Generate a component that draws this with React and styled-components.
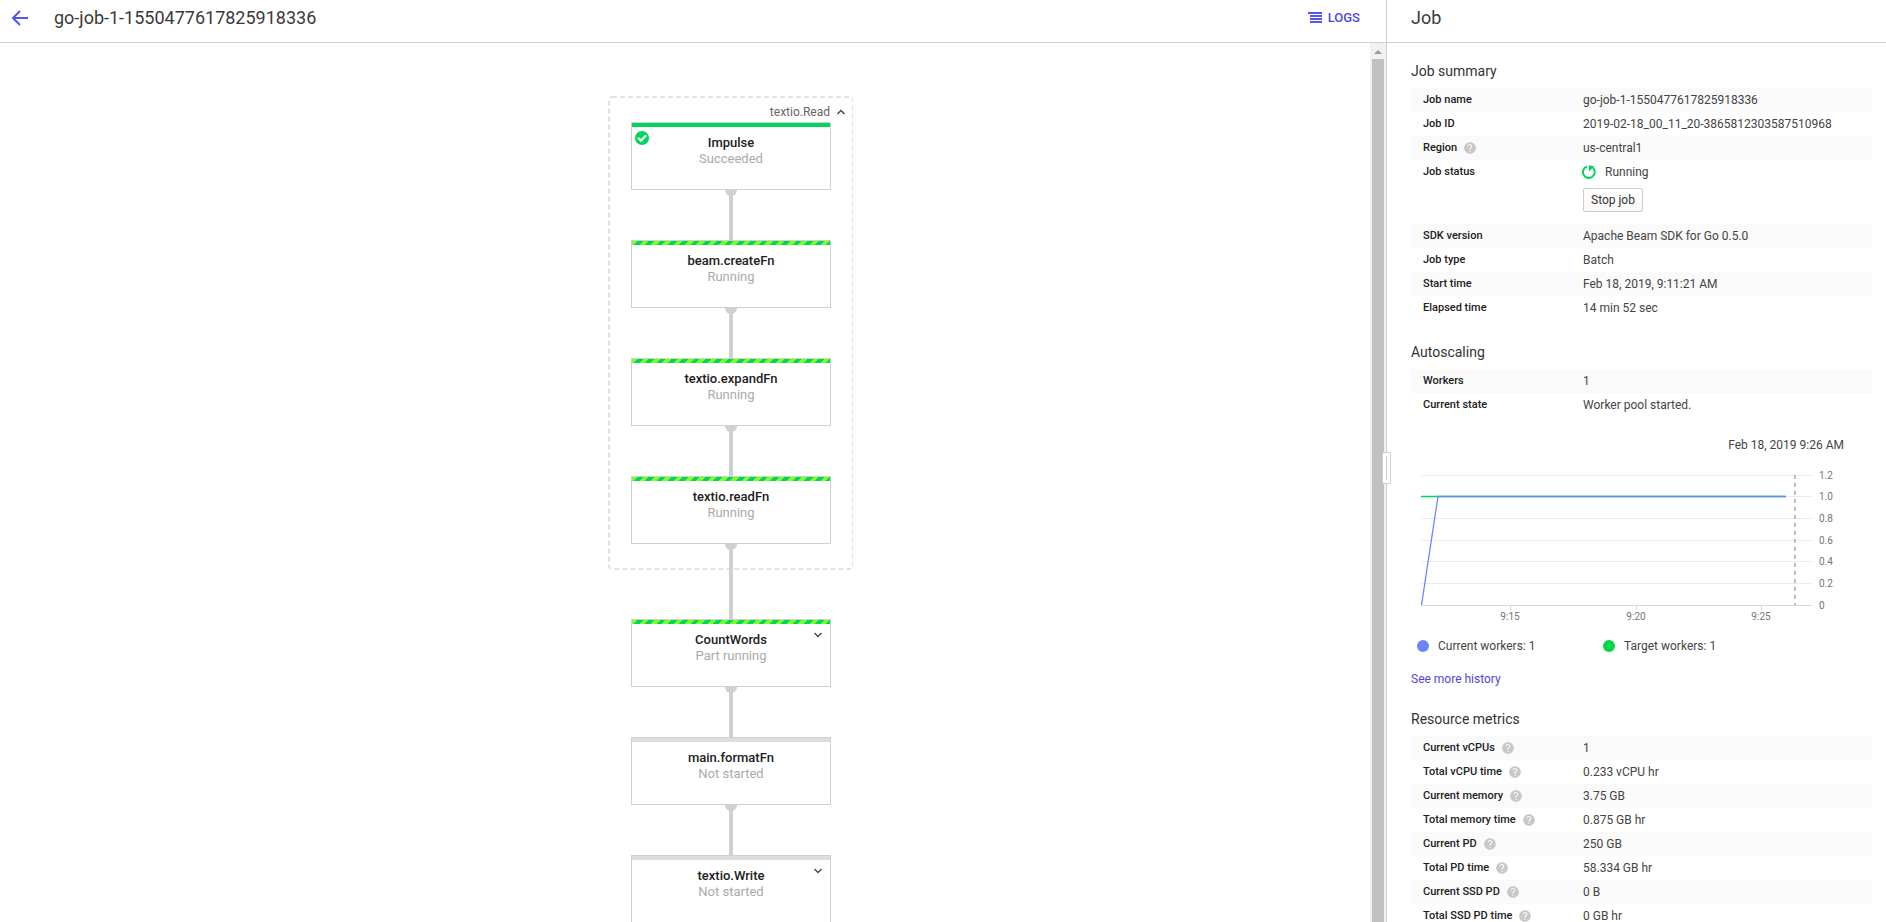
import React from "react";
import styled, { createGlobalStyle, css } from "styled-components";
import { MdHelp } from "react-icons/md";

const Global = createGlobalStyle`
  *, *::before, *::after { box-sizing: border-box; }
  html, body, #root { height: 100%; }
  body { margin: 0; background: #fff; overflow: hidden; }
  body, button { font-family: Roboto, "Liberation Sans", sans-serif; }
  h1, h2, h3, p { margin: 0; font-weight: 400; }
`;

const Page = styled.div`
  display: flex;
  height: 100vh;
  color: #333;
`;

const Main = styled.main`
  flex: 1;
  min-width: 0;
  display: flex;
  flex-direction: column;
`;

const Bar = styled.header`
  flex: none;
  display: flex;
  align-items: center;
  height: 43px;
  padding: 0 26px 6px 11px;
  border-bottom: 1px solid #d0d0d0;
`;

const PanelBar = styled(Bar)`
  padding: 0 14px 6px 24px;
`;

const Title = styled.h1`
  font-size: 18px;
  line-height: 24px;
  color: #3a3a3a;
`;

const BackLink = styled.a`
  display: flex;
  width: 43px;
`;

const LogsButton = styled.button`
  display: flex;
  align-items: center;
  gap: 6px;
  margin-left: auto;
  padding: 0;
  border: 0;
  background: none;
  color: #5146e0;
  font-size: 13px;
  line-height: 16px;
  font-weight: 500;
`;

const Workspace = styled.div`
  flex: 1;
  min-height: 0;
  display: flex;
`;

const Canvas = styled.section`
  flex: 1;
  display: flex;
  flex-direction: column;
  align-items: center;
  padding: 53px 0 0 92px;
  overflow: hidden;
`;

const Group = styled.div`
  flex: none;
  position: relative;
  width: 246px;
  height: 474px;
  padding-top: 6px;
  display: flex;
  flex-direction: column;
  align-items: center;
`;

const GroupOutline = styled.svg`
  position: absolute;
  inset: 0;
`;

const GroupHeader = styled.button`
  flex: none;
  display: flex;
  align-items: center;
  justify-content: flex-end;
  gap: 7px;
  width: 228px;
  height: 20px;
  padding: 0;
  border: 0;
  background: none;
  font-size: 12px;
  line-height: 16px;
  color: #666;
`;

const stripes = css`
  background: repeating-linear-gradient(135deg, #7dff26 0 4px, #00d65b 4px 8px);
`;

const Node = styled.article`
  flex: none;
  position: relative;
  width: 200px;
  height: 68px;
  border: 1px solid #d0d0d0;
  background: #fff;
  text-align: center;

  &::before {
    content: "";
    display: block;
    height: 4px;
    background: ${(p) => (p.$state === "done" ? "#00d65b" : "#dedede")};
    ${(p) => p.$state === "running" && stripes}
  }
`;

const NodeName = styled.h2`
  padding-top: 8px;
  font-size: 13px;
  line-height: 16px;
  font-weight: 500;
  color: #212121;
`;

const NodeState = styled.p`
  font-size: 13px;
  line-height: 16px;
  color: #aaa;
`;

const DoneBadge = styled.svg`
  position: absolute;
  left: 3px;
  top: 8px;
`;

const ExpandButton = styled.button`
  position: absolute;
  right: 8px;
  top: 12px;
  display: flex;
  padding: 0;
  border: 0;
  background: none;
`;

const Edge = styled.div`
  flex: none;
  position: relative;
  width: 4px;
  height: ${(p) => (p.$long ? 75 : 50)}px;
  background: #d0d0d0;

  &::before {
    content: "";
    position: absolute;
    left: -4px;
    top: 0;
    width: 12px;
    height: 6px;
    border-radius: 0 0 6px 6px;
    background: #d0d0d0;
  }
`;

const Scrollbar = styled.div`
  flex: none;
  width: 16px;
  display: flex;
  flex-direction: column;
  align-items: center;
  background: #f1f1f1;
`;

const ScrollArrow = styled.svg`
  flex: none;
  display: block;
`;

const ScrollThumb = styled.div`
  flex: 1;
  width: 12px;
  background: #c1c1c1;
`;

const Panel = styled.aside`
  position: relative;
  flex: none;
  width: 500px;
  display: flex;
  flex-direction: column;
  border-left: 1px solid #d0d0d0;
`;

const Handle = styled.div`
  position: absolute;
  left: -5px;
  top: 452px;
  width: 9px;
  height: 32px;
  display: flex;
  justify-content: center;
  padding: 3px 0;
  border: 1px solid #d0d0d0;
  border-radius: 2px;
  background: #fff;

  &::before {
    content: "";
    width: 1px;
    background: #d0d0d0;
  }
`;

const PanelBody = styled.div`
  flex: 1;
  min-height: 0;
  overflow: hidden;
  padding: 18px 14px 0 24px;
`;

const SectionTitle = styled.h2`
  font-size: 14px;
  line-height: 20px;
  padding-bottom: 7px;
  color: #333;
`;

const Section = styled.section`
  margin-bottom: 22px;
`;

const Facts = styled.table`
  width: 100%;
  border-collapse: collapse;
  table-layout: fixed;

  tr:nth-child(odd) { background: #fafafa; }
`;

const Label = styled.th`
  width: 172px;
  height: 24px;
  padding: 4px 0 4px 12px;
  vertical-align: top;
  text-align: left;
  font-size: 11px;
  line-height: 16px;
  font-weight: 500;
  color: #212121;
`;

const LabelRow = styled.span`
  display: flex;
  align-items: center;
  gap: 6px;
`;

const Value = styled.td`
  padding: 4px 0;
  vertical-align: top;
  font-size: 12px;
  line-height: 16px;
  color: #444;
`;

const Status = styled.div`
  display: flex;
  align-items: center;
  gap: 9px;
  margin-left: -1px;
`;

const StopButton = styled.button`
  display: block;
  height: 24px;
  margin: 8px 0;
  padding: 0 7px;
  border: 1px solid #ccc;
  border-radius: 2px;
  background: linear-gradient(#fff, #f8f8f8);
  font-size: 12px;
  line-height: 16px;
  color: #333;
`;

const ChartDate = styled.p`
  padding: 20px 28px 0 0;
  text-align: right;
  font-size: 12px;
  line-height: 16px;
  color: #444;
`;

const Chart = styled.svg`
  display: block;
  margin-top: 12px;

  text { font-size: 10px; fill: #757575; }
`;

const Legend = styled.div`
  display: flex;
  margin: 9px 0 17px 6px;
`;

const LegendItem = styled.span`
  display: flex;
  align-items: center;
  gap: 9px;
  width: 186px;
  font-size: 12px;
  line-height: 16px;
  color: #444;

  &::before {
    content: "";
    width: 12px;
    height: 12px;
    border-radius: 50%;
    background: ${(p) => p.$color};
  }
`;

const HistoryLink = styled.a`
  display: block;
  font-size: 12px;
  line-height: 16px;
  color: #5146e0;
  text-decoration: none;
`;

const Chevron = ({ up }) => (
  <svg width="8" height="6" viewBox="0 0 8 6" fill="none" stroke="#444" strokeWidth="1.3">
    <path d={up ? "M0.5 5 4 1.5 7.5 5" : "M0.5 1 4 4.5 7.5 1"} />
  </svg>
);

const Step = ({ name, status, state, expandable }) => (
  <Node $state={state}>
    <NodeName>{name}</NodeName>
    <NodeState>{status}</NodeState>
    {state === "done" && (
      <DoneBadge width="14" height="14" viewBox="0 0 14 14">
        <circle cx="7" cy="7" r="7" fill="#00d65b" />
        <path d="M3 6.8 6 9.6 11.2 4.2" fill="none" stroke="#fff" strokeWidth="2.2" />
      </DoneBadge>
    )}
    {expandable && (
      <ExpandButton aria-label={`Expand ${name}`}>
        <Chevron />
      </ExpandButton>
    )}
  </Node>
);

const FactTable = ({ rows }) => (
  <Facts>
    <tbody>
      {rows.map(([label, value, help]) => (
        <tr key={label}>
          <Label scope="row">
            <LabelRow>
              {label}
              {help && <MdHelp size={14} color="#c8c8c8" />}
            </LabelRow>
          </Label>
          <Value>{value}</Value>
        </tr>
      ))}
    </tbody>
  </Facts>
);

const summary = [
  ["Job name", "go-job-1-1550477617825918336"],
  ["Job ID", "2019-02-18_00_11_20-3865812303587510968"],
  ["Region", "us-central1", true],
  [
    "Job status",
    <>
      <Status>
        <svg width="14" height="14" viewBox="0 0 14 14">
          <path d="M11 2.8A5.9 5.9 0 1 1 5 1.4" fill="none" stroke="#00d65b" strokeWidth="2" />
          <path d="M7 0.2 12.4 1.2 7 6.6Z" fill="#00d65b" />
        </svg>
        Running
      </Status>
      <StopButton>Stop job</StopButton>
    </>,
  ],
  ["SDK version", "Apache Beam SDK for Go 0.5.0"],
  ["Job type", "Batch"],
  ["Start time", "Feb 18, 2019, 9:11:21 AM"],
  ["Elapsed time", "14 min 52 sec"],
];

const autoscaling = [
  ["Workers", "1"],
  ["Current state", "Worker pool started."],
];

const metrics = [
  ["Current vCPUs", "1", true],
  ["Total vCPU time", "0.233 vCPU hr", true],
  ["Current memory", "3.75 GB", true],
  ["Total memory time", "0.875 GB hr", true],
  ["Current PD", "250 GB", true],
  ["Total PD time", "58.334 GB hr", true],
  ["Current SSD PD", "0 B", true],
  ["Total SSD PD time", "0 GB hr", true],
];

const gridLines = [
  [10, "1.2"],
  [31, "1.0"],
  [53, "0.8"],
  [75, "0.6"],
  [96, "0.4"],
  [118, "0.2"],
  [140, "0"],
];

const ticks = [
  [99, "9:15"],
  [225, "9:20"],
  [350, "9:25"],
];

const WorkersChart = () => (
  <Chart width="440" height="164" viewBox="0 0 440 164" role="img" aria-label="Workers over time">
    {gridLines.map(([y, label]) => (
      <g key={label}>
        <path d={`M10 ${y + 0.5}H401`} stroke={label === "0" ? "#d8d8d8" : "#ebebeb"} />
        <text x="408" y={y + 4}>{label}</text>
      </g>
    ))}
    {ticks.map(([x, label]) => (
      <g key={label}>
        <path d={`M${x + 0.5} 140v5`} stroke="#d8d8d8" />
        <text x={x} y="155" textAnchor="middle">{label}</text>
      </g>
    ))}
    <path d="M384 10V140" stroke="#bdbdbd" strokeWidth="2" strokeDasharray="4 4" />
    <path d="M10 31.5H375" stroke="#00d84c" strokeWidth="1.5" />
    <path d="M10.5 140 27 31.5H375" fill="none" stroke="#6a86ff" strokeWidth="1.3" />
  </Chart>
);

export default function App() {
  return (
    <>
      <Global />
      <Page>
        <Main>
          <Bar>
            <BackLink href="#" aria-label="Back">
              <svg width="18" height="16" viewBox="0 0 18 16" fill="none" stroke="#5355f0" strokeWidth="2">
                <path d="M17 8H2.5M9 1 2 8 9 15" />
              </svg>
            </BackLink>
            <Title>go-job-1-1550477617825918336</Title>
            <LogsButton>
              <svg width="14" height="12" viewBox="0 0 14 12" fill="#5355f0">
                <path d="M0 0H14V2H0ZM2 3H14V5H2ZM2 6H14V8H2ZM2 9H14V11H2Z" />
              </svg>
              LOGS
            </LogsButton>
          </Bar>
          <Workspace>
            <Canvas>
              <Group>
                <GroupOutline width="245" height="475" viewBox="0 0 245 475">
                  <rect x="1" y="1" width="244" height="472" rx="3" fill="none" stroke="#e2e2e2" strokeWidth="2" strokeDasharray="5 3" />
                </GroupOutline>
                <GroupHeader>
                  textio.Read
                  <Chevron up />
                </GroupHeader>
                <Step name="Impulse" status="Succeeded" state="done" />
                <Edge />
                <Step name="beam.createFn" status="Running" state="running" />
                <Edge />
                <Step name="textio.expandFn" status="Running" state="running" />
                <Edge />
                <Step name="textio.readFn" status="Running" state="running" />
                <Edge $long />
                <Step name="CountWords" status="Part running" state="running" expandable />
                <Edge />
                <Step name="main.formatFn" status="Not started" />
                <Edge />
                <Step name="textio.Write" status="Not started" expandable />
              </Group>
            </Canvas>
            <Scrollbar>
              <ScrollArrow width="16" height="16" viewBox="0 0 16 16">
                <path d="M4 11 8 7 12 11Z" fill="#999" />
              </ScrollArrow>
              <ScrollThumb />
            </Scrollbar>
          </Workspace>
        </Main>
        <Panel>
          <PanelBar>
            <Title as="h2">Job</Title>
          </PanelBar>
          <Handle />
          <PanelBody>
            <Section>
              <SectionTitle>Job summary</SectionTitle>
              <FactTable rows={summary} />
            </Section>
            <Section>
              <SectionTitle>Autoscaling</SectionTitle>
              <FactTable rows={autoscaling} />
              <ChartDate>Feb 18, 2019 9:26 AM</ChartDate>
              <WorkersChart />
              <Legend>
                <LegendItem $color="#6a86ff">Current workers: 1</LegendItem>
                <LegendItem $color="#00d84c">Target workers: 1</LegendItem>
              </Legend>
              <HistoryLink href="#">See more history</HistoryLink>
            </Section>
            <Section>
              <SectionTitle>Resource metrics</SectionTitle>
              <FactTable rows={metrics} />
            </Section>
          </PanelBody>
        </Panel>
      </Page>
    </>
  );
}
